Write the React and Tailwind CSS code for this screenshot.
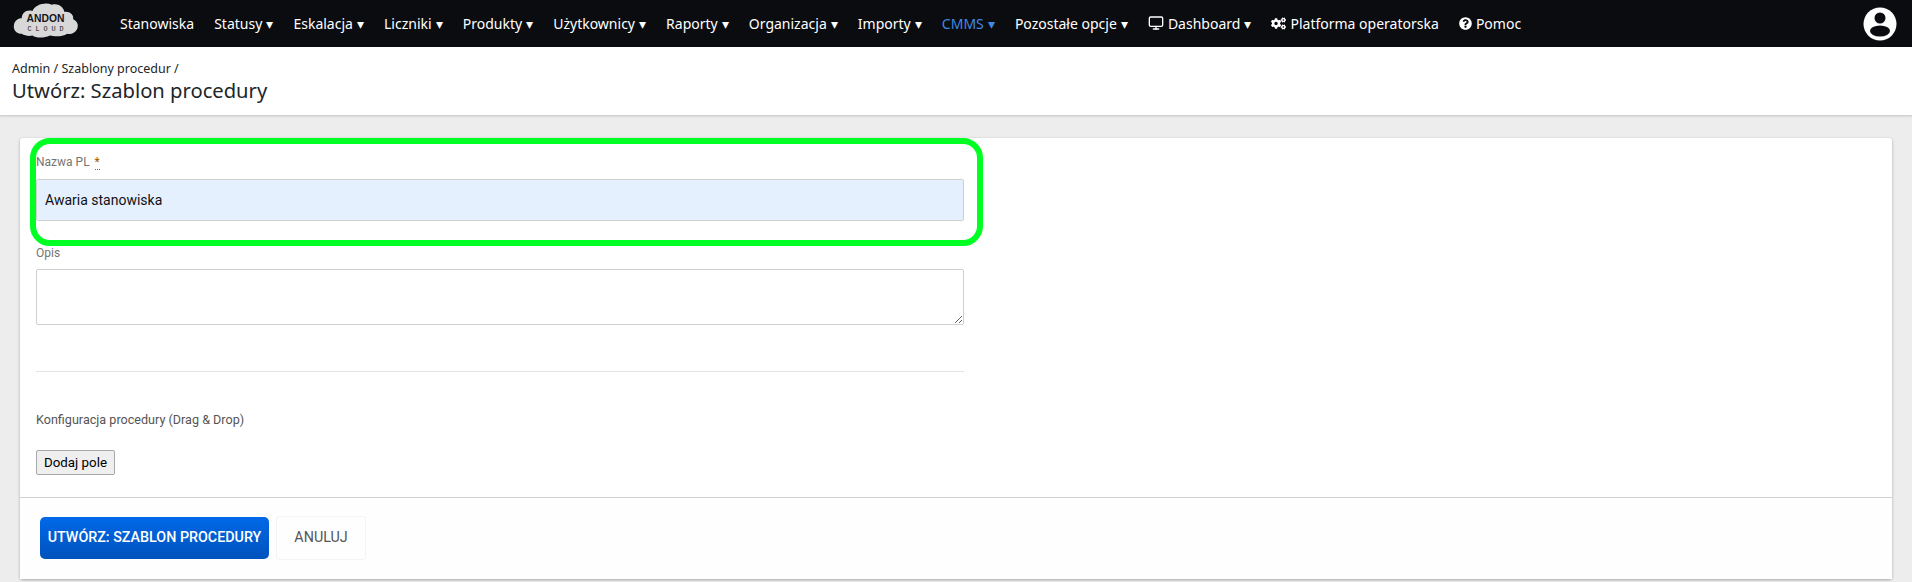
import { FaCogs, FaQuestionCircle } from 'react-icons/fa';
import { Monitor } from 'lucide-react';

const navItems = [
  { label: 'Stanowiska' },
  { label: 'Statusy', menu: true },
  { label: 'Eskalacja', menu: true },
  { label: 'Liczniki', menu: true },
  { label: 'Produkty', menu: true },
  { label: 'Użytkownicy', menu: true },
  { label: 'Raporty', menu: true },
  { label: 'Organizacja', menu: true },
  { label: 'Importy', menu: true },
  { label: 'CMMS', menu: true, active: true },
  { label: 'Pozostałe opcje', menu: true },
];

function Logo() {
  return (
    <svg width="66" height="40" viewBox="0 0 68 44" preserveAspectRatio="none" className="-mt-[6px] shrink-0">
      <path
        d="M9 36 C3 36 0 31 1 26 C2 21 6 19 9 19 C9 13 14 9 20 11 C23 4 33 1 40 4 C46 2 52 6 53 12 C58 11 63 15 62 20 C66 22 68 26 66 31 C64 35 60 37 56 36 C50 40 42 39 38 38 C32 41 24 41 20 38 C16 39 12 38 9 36 Z"
        fill="#d8d8d8"
      />
      <text x="33.5" y="23.5" textAnchor="middle" fontFamily="Liberation Sans" fontSize="12" fontWeight="700" fill="#15151a" textLength="39" lengthAdjust="spacingAndGlyphs">ANDON</text>
      <text x="33.5" y="33.5" textAnchor="middle" fontFamily="Liberation Mono" fontSize="7" fill="#15151a" textLength="37">CLOUD</text>
    </svg>
  );
}

function UserIcon() {
  return (
    <svg width="34" height="34" viewBox="0 0 34 34">
      <circle cx="17" cy="17" r="16.5" fill="#fff" />
      <circle cx="17" cy="11" r="5.5" fill="#0b0c10" />
      <ellipse cx="17" cy="24" rx="10" ry="5.5" fill="#0b0c10" />
    </svg>
  );
}

function Caret() {
  return <span className="ml-[4px] text-[14px]">▾</span>;
}

function NavItem({ label, menu, active }) {
  return (
    <a className={`whitespace-nowrap ${active ? 'text-[#3f8ae2]' : 'text-white'}`}>
      {label}
      {menu && <Caret />}
    </a>
  );
}

export default function App() {
  return (
    <div className="relative h-[582px] overflow-hidden bg-[#ededed] font-['Roboto',sans-serif]">
      <nav className="flex h-[47px] items-center bg-[#0b0c10] pl-[13px] pr-[15px] font-['Noto_Sans',sans-serif] text-[14px]">
        <Logo />
        <div className="ml-[41px] flex items-center gap-[20.1px] pb-[1px]">
          {navItems.map((item) => (
            <NavItem key={item.label} {...item} />
          ))}
          <a className="flex items-center whitespace-nowrap text-white">
            <Monitor size={16} className="mr-[4px]" />
            Dashboard
            <Caret />
          </a>
          <a className="flex items-center whitespace-nowrap text-white">
            <FaCogs size={15} className="mr-[4px]" />
            Platforma operatorska
          </a>
          <a className="flex items-center whitespace-nowrap text-white">
            <FaQuestionCircle size={13} className="mr-[4px]" />
            Pomoc
          </a>
        </div>
        <div className="ml-auto flex">
          <UserIcon />
        </div>
      </nav>

      <header className="h-[69px] border-b border-[#d0d0d0] bg-white pl-[12px] pt-[13px] font-['Noto_Sans',sans-serif] text-[#212529] shadow-[0_1px_2px_rgba(0,0,0,0.08)]">
        <div className="text-[12.5px] leading-[18px]">Admin / Szablony procedur /</div>
        <h1 className="text-[20.2px] leading-[25px]">Utwórz: Szablon procedury</h1>
      </header>

      <main className="relative mx-[20px] mt-[22px] h-[441px] rounded-[3px] bg-white shadow-[0_1px_3px_rgba(0,0,0,0.3)]">
        <div className="h-[359px] pl-[16px] pt-[17px]">
          <div className="w-[928px]">
            <label className="block text-[12px] leading-[14px] text-[#757575]">
              Nazwa PL <span className="ml-[2px] border-b border-dotted border-[#a05a00] text-[#a05a00]">*</span>
            </label>
            <input
              readOnly
              value="Awaria stanowiska"
              className="mt-[10px] block h-[42px] w-full rounded-[2px] border border-[#cfcfcf] bg-[#e5f0ff] px-[8px] text-[14px] text-[#111] outline-none"
            />
            <label className="mt-[25px] block text-[12px] leading-[14px] text-[#757575]">Opis</label>
            <textarea
              readOnly
              className="mt-[9px] block h-[56px] w-full rounded-[2px] border border-[#cfcfcf] bg-white outline-none"
            />
            <hr className="mt-[46px] border-[#e4e4e4]" />
            <p className="mt-[40px] text-[12.6px] leading-[16px] text-[#555]">Konfiguracja procedury (Drag &amp; Drop)</p>
            <button className="mt-[22px] block h-[25px] w-[79px] rounded-[2px] border border-[#a8a8a8] bg-[#efefef] text-[13.33px] text-black">
              Dodaj pole
            </button>
          </div>
        </div>
        <footer className="flex h-[82px] items-start gap-[7px] border-t border-[#d2d2d2] bg-[#fefefe] pl-[20px] pt-[19px]">
          <button className="h-[42px] w-[229px] rounded-[5px] bg-gradient-to-b from-[#0069e8] to-[#0052bd] text-[14.3px] font-medium text-white">
            UTWÓRZ: SZABLON PROCEDURY
          </button>
          <button className="-mt-px h-[44px] w-[90px] rounded-[3px] border border-[#f4f4f4] text-[14.3px] text-[#555]">
            ANULUJ
          </button>
        </footer>
      </main>

      <div className="absolute left-[30px] top-[138px] h-[108px] w-[953px] rounded-[20px] border-[6px] border-[#00ff22]" />
    </div>
  );
}
